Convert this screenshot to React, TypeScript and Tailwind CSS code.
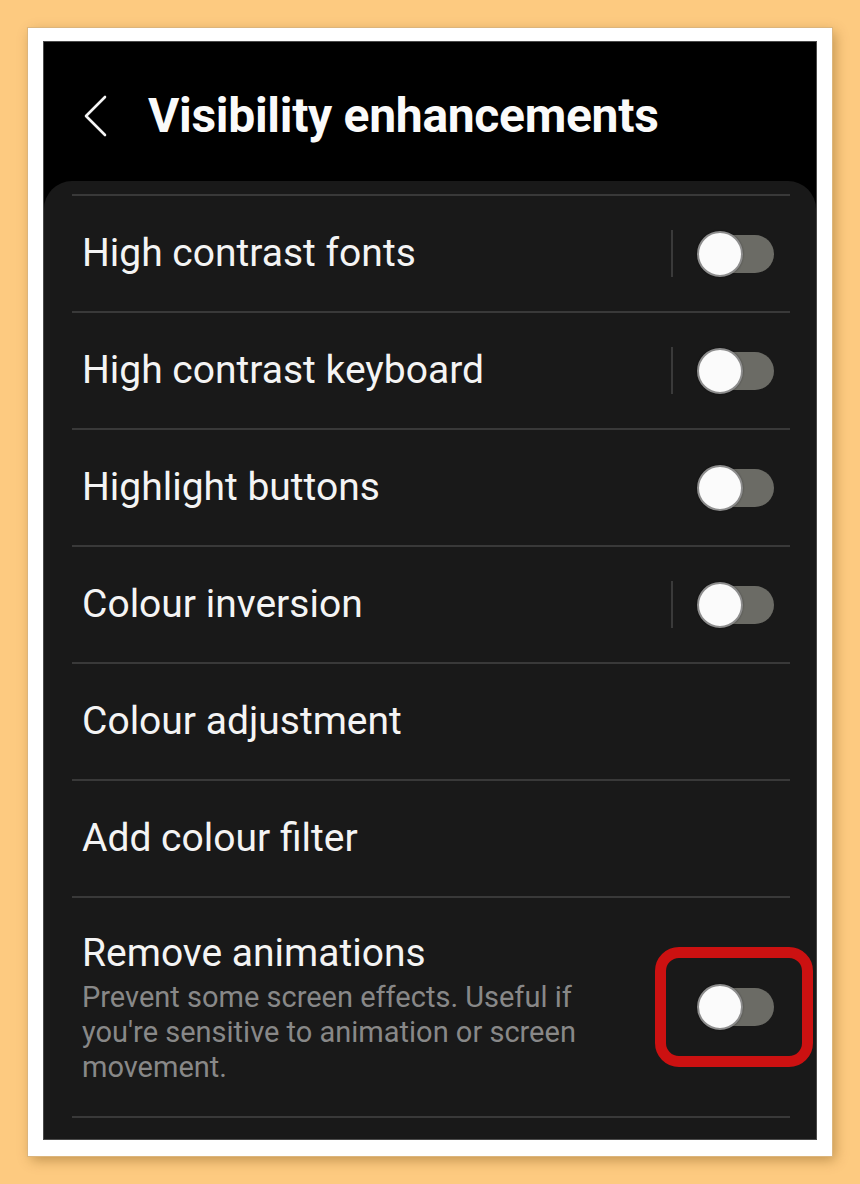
import React from "react";

const font = { fontFamily: "Roboto, 'Noto Sans', sans-serif" };

function Toggle() {
  return (
    <div className="relative w-[77px] h-[46px] shrink-0">
      <div className="absolute left-[3px] right-0 top-[4px] h-[38px] rounded-full bg-[#6b6b65]" />
      <div className="absolute left-0 top-0 w-[46px] h-[46px] rounded-full bg-[#fbfbfb] border-[2px] border-[#8d8d8d] shadow-[0_0_2px_rgba(0,0,0,0.4)]" />
    </div>
  );
}

function Row({ label, sep, toggle = true }: { label: string; sep?: boolean; toggle?: boolean }) {
  return (
    <div className="mx-[28px] mr-[26px] border-t-2 border-[#393939] h-[117px] flex items-center pl-[10px] pr-[16px]">
      <div className="flex-1 text-[39px] text-[#f4f4f4] leading-none">{label}</div>
      {sep && <div className="w-[2px] h-[47px] bg-[#3a3a3a] mr-[24px]" />}
      {toggle && <Toggle />}
    </div>
  );
}

export default function App() {
  return (
    <div className="w-[860px] h-[1184px] bg-[#fdca80] pt-[28px] pl-[28px]" style={font}>
      <div className="w-[804px] h-[1128px] bg-white pt-[14px] pl-[16px] shadow-[0_0_0_1px_#dcb57c,3px_4px_12px_rgba(120,80,20,0.45)]">
        <div className="w-[772px] h-[1097px] bg-black flex flex-col shadow-[0_0_0_1px_#4a4a4a] overflow-hidden">
          <div className="h-[139px] pt-[8px] flex items-center shrink-0">
            <svg width="30" height="44" viewBox="0 0 30 44" className="ml-[38px]">
              <polyline points="23,3 4,22 23,41" fill="none" stroke="#f5f5f5" strokeWidth="2.6" strokeLinecap="round" strokeLinejoin="round" />
            </svg>
            <div className="ml-[36px] text-[48px] font-bold text-[#fafafa] leading-none tracking-[-0.3px]">
              Visibility enhancements
            </div>
          </div>
          <div className="flex-1 bg-[#191919] rounded-t-[28px] pt-[13px] flex flex-col">
            <Row label="High contrast fonts" sep />
            <Row label="High contrast keyboard" sep />
            <Row label="Highlight buttons" />
            <Row label="Colour inversion" sep />
            <Row label="Colour adjustment" toggle={false} />
            <Row label="Add colour filter" toggle={false} />
            <div className="mx-[28px] mr-[26px] border-t-2 border-[#393939] h-[220px] flex items-center pl-[10px] pr-[16px]">
              <div className="flex-1 pr-[95px]">
                <div className="text-[39px] text-[#f4f4f4] leading-[46px]">Remove animations</div>
                <div className="text-[29px] text-[#888888] leading-[35px] mt-[4px]">
                  Prevent some screen effects. Useful if you're sensitive to animation or screen movement.
                </div>
              </div>
              <div className="relative">
                <Toggle />
                <div className="absolute left-[-42px] right-[-39px] top-[-37px] bottom-[-37px] border-[11px] border-[#cc1111] rounded-[24px]" />
              </div>
            </div>
            <div className="mx-[28px] mr-[26px] border-t-2 border-[#393939]" />
          </div>
        </div>
      </div>
    </div>
  );
}
